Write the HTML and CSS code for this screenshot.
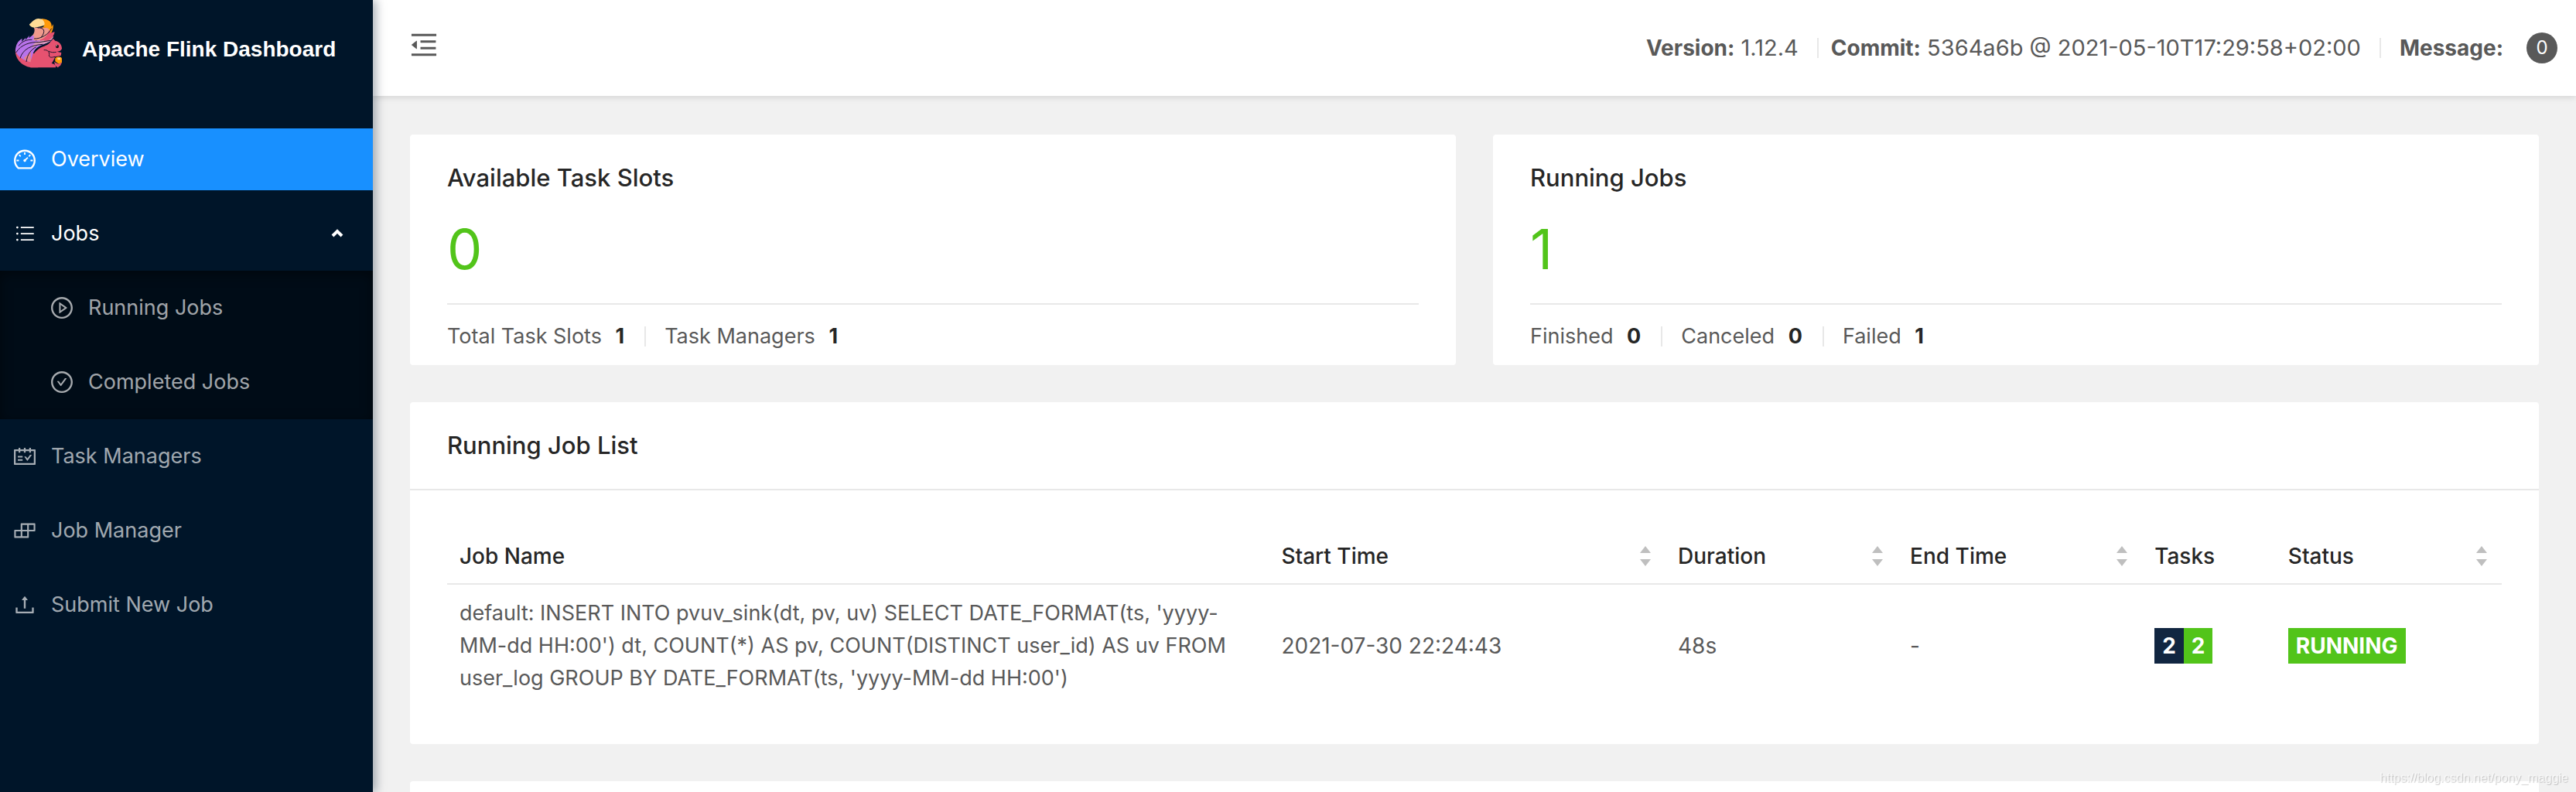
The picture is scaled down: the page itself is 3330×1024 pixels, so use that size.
FILE: index.html
```html
<!DOCTYPE html>
<html lang="en">

<head>
    <meta charset="utf-8">
    <meta name="viewport" content="width=device-width, initial-scale=1">
    <title>Apache Flink Dashboard</title>
    <link rel="stylesheet" href="styles.css">
</head>

<body>

    <div class="layout">
        <!-- Sidebar -->
        <aside class="sidebar">
            <a class="logo" href="#">
                <svg class="logo-img" viewBox="0 0 204 204" aria-hidden="true">
                    <!-- back and bottom of the tail -->
                    <path fill="#e65270" d="M12 124C8 160 34 190 72 196H100V150L60 130L20 116Z"/>
                    <!-- purple part of the tail -->
                    <path fill="#b873ea" d="M12 132C12 108 22 92 38 84L36 96L52 80L50 90L66 72L64 82L84 66L90 92L134 78L154 90C136 104 100 108 86 130C76 146 74 162 78 176C40 170 18 150 12 132Z"/>
                    <path fill="#d99ab8" d="M96 96C118 92 140 74 160 76C152 92 136 104 112 106C98 108 88 112 76 122C78 108 86 100 96 96Z"/>
                    <path fill="#e8808c" d="M44 158C58 150 66 140 72 130C70 146 70 162 76 176C60 172 50 166 44 158Z"/>
                    <!-- middle of the tail -->
                    <path fill="#ef9a8c" d="M84 42C88 52 86 62 76 74L84 72L82 90C104 94 134 84 150 62L146 40Z"/>
                    <path fill="#e65270" d="M108 88C126 82 140 68 142 50L150 62C144 78 130 90 108 92Z"/>
                    <!-- tip -->
                    <path fill="#ffdc96" d="M66 28C76 22 78 10 100 6C116 8 132 10 140 26C120 36 94 38 86 42C74 40 66 34 66 28Z"/>
                    <path fill="#ff9a0a" d="M112 6C140 8 154 18 152 38L158 28C160 46 154 58 148 66C148 48 140 38 114 42C128 34 130 20 112 6Z"/>
                    <!-- ears -->
                    <path fill="#e65270" d="M122 92C130 74 144 60 164 58C160 76 150 86 138 92Z"/>
                    <!-- body -->
                    <path fill="#e65270" d="M70 196C66 168 80 138 104 122C122 112 140 110 148 96L158 84L166 92C182 94 192 108 192 122C188 132 180 134 172 134L190 138L188 150L166 154C162 164 158 172 152 180C164 182 170 188 168 196Z"/>
                    <path fill="none" stroke="#20142c" stroke-width="3" d="M84 84C110 86 142 66 152 44M14 138C34 106 70 96 104 98L154 90M30 160C40 124 76 108 118 106M54 174C58 146 70 128 92 116M98 42C124 40 130 56 112 78M24 112C40 92 56 88 76 88M122 128C138 126 146 138 142 150C146 160 154 156 166 154M140 132C150 138 160 138 170 136"/>
                    <ellipse cx="174" cy="114" rx="6" ry="7" fill="#1a0b14"/>
                    <circle cx="172" cy="111" r="2" fill="#fff"/>
                    <!-- acorn -->
                    <path fill="#ff9a0a" d="M166 160C172 152 188 152 192 160V176L180 182L166 172Z"/>
                    <path fill="#ffdc96" d="M174 158H186V166H176Z"/>
                    <path fill="#e65270" d="M162 174L178 182L192 176L186 188L176 196L166 188Z"/>
                </svg>
                <h1>Apache Flink Dashboard</h1>
            </a>

            <nav class="menu">
                <a class="menu-item active" href="#">
                    <svg class="icon" viewBox="64 64 896 896" aria-hidden="true"><path d="M924.8 385.6a446.7 446.7 0 00-96-142.4 446.7 446.7 0 00-142.4-96C631.1 123.8 572.5 112 512 112s-119.1 11.8-174.4 35.2a446.7 446.7 0 00-142.4 96 446.7 446.7 0 00-96 142.4C75.8 440.9 64 499.5 64 560c0 132.7 58.3 257.7 159.9 343.1l1.7 1.4c5.8 4.8 13.1 7.5 20.6 7.5h531.7c7.5 0 14.8-2.7 20.6-7.5l1.7-1.4C901.7 817.7 960 692.7 960 560c0-60.5-11.9-119.1-35.2-174.4zM761.4 836H262.6A371.12 371.12 0 01140 560c0-99.4 38.7-192.8 109-263 70.3-70.3 163.7-109 263-109 99.4 0 192.8 38.7 263 109 70.3 70.3 109 163.7 109 263 0 105.6-44.5 205.5-122.6 276zM623.5 421.5a8.03 8.03 0 00-11.3 0L527.7 506c-18.7-5-39.4-.2-54.1 14.5a55.95 55.95 0 000 79.2 55.95 55.95 0 0079.2 0 55.87 55.87 0 0014.5-54.1l84.5-84.5c3.1-3.1 3.1-8.2 0-11.3l-28.3-28.3zM490 320h44c4.4 0 8-3.6 8-8v-80c0-4.4-3.6-8-8-8h-44c-4.4 0-8 3.6-8 8v80c0 4.4 3.6 8 8 8zm260 218v44c0 4.4 3.6 8 8 8h80c4.4 0 8-3.6 8-8v-44c0-4.4-3.6-8-8-8h-80c-4.4 0-8 3.6-8 8zm12.7-197.2l-31.1-31.1a8.03 8.03 0 00-11.3 0l-56.6 56.6a8.03 8.03 0 000 11.3l31.1 31.1c3.1 3.1 8.2 3.1 11.3 0l56.6-56.6c3.1-3.1 3.1-8.2 0-11.3zm-458.6-31.1a8.03 8.03 0 00-11.3 0l-31.1 31.1a8.03 8.03 0 000 11.3l56.6 56.6c3.1 3.1 8.2 3.1 11.3 0l31.1-31.1c3.1-3.1 3.1-8.2 0-11.3l-56.6-56.6zM262 530h-80c-4.4 0-8 3.6-8 8v44c0 4.4 3.6 8 8 8h80c4.4 0 8-3.6 8-8v-44c0-4.4-3.6-8-8-8z"/></svg>
                    <span>Overview</span>
                </a>

                <button class="menu-item menu-title" type="button" aria-expanded="true">
                    <svg class="icon" viewBox="64 64 896 896" aria-hidden="true"><path d="M348 228h540v56H348zM348 484h540v56H348zM348 740h540v56H348zM160 256a44 44 0 1088 0 44 44 0 10-88 0zM160 512a44 44 0 1088 0 44 44 0 10-88 0zM160 768a44 44 0 1088 0 44 44 0 10-88 0z"/></svg>
                    <span>Jobs</span>
                    <svg class="arrow" viewBox="0 0 16 12" aria-hidden="true"><path d="M2 9L8 3L14 9"/></svg>
                </button>

                <div class="submenu">
                    <a class="menu-item" href="#">
                        <svg class="icon" viewBox="64 64 896 896" aria-hidden="true"><path d="M512 64C264.6 64 64 264.6 64 512s200.6 448 448 448 448-200.6 448-448S759.4 64 512 64zm0 820c-205.4 0-372-166.6-372-372s166.6-372 372-372 372 166.6 372 372-166.6 372-372 372z"/><path d="M719.4 499.1l-296.1-215A15.9 15.9 0 00398 297v430c0 13.1 14.8 20.5 25.3 12.9l296.1-215a15.9 15.9 0 000-25.8zm-257.6 134V390.9L628.5 512 461.8 633.1z"/></svg>
                        <span>Running Jobs</span>
                    </a>
                    <a class="menu-item" href="#">
                        <svg class="icon" viewBox="64 64 896 896" aria-hidden="true"><path d="M512 64C264.6 64 64 264.6 64 512s200.6 448 448 448 448-200.6 448-448S759.4 64 512 64zm0 820c-205.4 0-372-166.6-372-372s166.6-372 372-372 372 166.6 372 372-166.6 372-372 372z"/><path d="M699 353h-46.9c-10.2 0-19.9 4.9-25.9 13.3L469 584.3l-71.2-98.8c-6-8.3-15.6-13.3-25.9-13.3H325c-6.5 0-10.3 7.4-6.5 12.7l124.6 172.8a31.8 31.8 0 0051.7 0l210.6-292c3.9-5.3.1-12.7-6.4-12.7z"/></svg>
                        <span>Completed Jobs</span>
                    </a>
                </div>

                <a class="menu-item" href="#">
                    <svg class="icon" viewBox="64 64 896 896" aria-hidden="true"><path d="M928 224H768v-56c0-4.4-3.6-8-8-8h-56c-4.4 0-8 3.6-8 8v56H548v-56c0-4.4-3.6-8-8-8h-56c-4.4 0-8 3.6-8 8v56H328v-56c0-4.4-3.6-8-8-8h-56c-4.4 0-8 3.6-8 8v56H96c-17.7 0-32 14.3-32 32v576c0 17.7 14.3 32 32 32h832c17.7 0 32-14.3 32-32V256c0-17.7-14.3-32-32-32zm-40 568H136V296h120v56c0 4.4 3.6 8 8 8h56c4.4 0 8-3.6 8-8v-56h148v56c0 4.4 3.6 8 8 8h56c4.4 0 8-3.6 8-8v-56h148v56c0 4.4 3.6 8 8 8h56c4.4 0 8-3.6 8-8v-56h120v496zM416 496H232c-4.4 0-8 3.6-8 8v48c0 4.4 3.6 8 8 8h184c4.4 0 8-3.6 8-8v-48c0-4.4-3.6-8-8-8zm0 136H232c-4.4 0-8 3.6-8 8v48c0 4.4 3.6 8 8 8h184c4.4 0 8-3.6 8-8v-48c0-4.4-3.6-8-8-8zm308.2-177.4L620.6 598.3l-52.8-73.1c-3-4.2-7.8-6.6-12.9-6.6H500c-6.5 0-10.3 7.4-6.5 12.7l114.1 158.2a15.9 15.9 0 0025.8 0l165-228.7c3.8-5.3 0-12.7-6.5-12.7H737c-5-.1-9.8 2.4-12.8 6.5z"/></svg>
                    <span>Task Managers</span>
                </a>
                <a class="menu-item" href="#">
                    <svg class="icon" viewBox="64 64 896 896" aria-hidden="true"><path d="M916 210H376c-17.7 0-32 14.3-32 32v236H108c-17.7 0-32 14.3-32 32v272c0 17.7 14.3 32 32 32h540c17.7 0 32-14.3 32-32V546h236c17.7 0 32-14.3 32-32V242c0-17.7-14.3-32-32-32zm-504 68h200v200H412V278zm-68 468H144V546h200v200zm268 0H412V546h200v200zm268-268H680V278h200v200z"/></svg>
                    <span>Job Manager</span>
                </a>
                <a class="menu-item" href="#">
                    <svg class="icon" viewBox="64 64 896 896" aria-hidden="true"><path d="M400 317.7h73.9V656c0 4.4 3.6 8 8 8h60c4.4 0 8-3.6 8-8V317.7H624c6.7 0 10.4-7.7 6.3-12.9L518.3 163a8 8 0 00-12.6 0l-112 141.7c-4.1 5.3-.4 13 6.3 13zM878 626h-60c-4.4 0-8 3.6-8 8v154H214V634c0-4.4-3.6-8-8-8h-60c-4.4 0-8 3.6-8 8v198c0 17.7 14.3 32 32 32h684c17.7 0 32-14.3 32-32V634c0-4.4-3.6-8-8-8z"/></svg>
                    <span>Submit New Job</span>
                </a>
            </nav>
        </aside>

        <div class="main">
            <!-- Top bar -->
            <header class="header">
                <button class="fold-button" type="button" aria-label="Collapse menu">
                    <svg viewBox="64 64 896 896" aria-hidden="true"><path d="M408 442h480c4.4 0 8-3.6 8-8v-56c0-4.4-3.6-8-8-8H408c-4.4 0-8 3.6-8 8v56c0 4.4 3.6 8 8 8zm-8 204c0 4.4 3.6 8 8 8h480c4.4 0 8-3.6 8-8v-56c0-4.4-3.6-8-8-8H408c-4.4 0-8 3.6-8 8v56zm504-486H120c-4.4 0-8 3.6-8 8v56c0 4.4 3.6 8 8 8h784c4.4 0 8-3.6 8-8v-56c0-4.4-3.6-8-8-8zm0 632H120c-4.4 0-8 3.6-8 8v56c0 4.4 3.6 8 8 8h784c4.4 0 8-3.6 8-8v-56c0-4.4-3.6-8-8-8zM115.4 518.9L271.7 642c5.8 4.6 14.4.5 14.4-6.9V388.9c0-7.4-8.5-11.5-14.4-6.9L115.4 505.1a8.74 8.74 0 000 13.8z"/></svg>
                </button>
                <div class="info">
                    <span><strong>Version:</strong> 1.12.4</span>
                    <span class="divider"></span>
                    <span><strong>Commit:</strong> 5364a6b @ 2021-05-10T17:29:58+02:00</span>
                    <span class="divider"></span>
                    <strong class="message">Message:</strong>
                    <span class="badge">0</span>
                </div>
            </header>

            <main class="content">
                <div class="stats">
                    <section class="card stat">
                        <h2>Available Task Slots</h2>
                        <div class="total">0</div>
                        <div class="stat-footer">
                            <span>Total Task Slots <b>1</b></span>
                            <span class="divider"></span>
                            <span>Task Managers <b>1</b></span>
                        </div>
                    </section>
                    <section class="card stat">
                        <h2>Running Jobs</h2>
                        <div class="total">1</div>
                        <div class="stat-footer">
                            <span>Finished <b>0</b></span>
                            <span class="divider"></span>
                            <span>Canceled <b>0</b></span>
                            <span class="divider"></span>
                            <span>Failed <b>1</b></span>
                        </div>
                    </section>
                </div>

                <section class="card">
                    <h2 class="card-head">Running Job List</h2>
                    <div class="card-body">
                        <table class="job-table">
                            <thead>
                                <tr>
                                    <th class="col-name">Job Name</th>
                                    <th class="col-start"><div class="sortable">Start Time <svg class="sorter" viewBox="0 0 20 26" aria-hidden="true"><path d="M10 0L17 9H3ZM10 26L17 17H3Z"/></svg></div></th>
                                    <th class="col-duration"><div class="sortable">Duration <svg class="sorter" viewBox="0 0 20 26" aria-hidden="true"><path d="M10 0L17 9H3ZM10 26L17 17H3Z"/></svg></div></th>
                                    <th class="col-end"><div class="sortable">End Time <svg class="sorter" viewBox="0 0 20 26" aria-hidden="true"><path d="M10 0L17 9H3ZM10 26L17 17H3Z"/></svg></div></th>
                                    <th class="col-tasks">Tasks</th>
                                    <th class="col-status"><div class="sortable">Status <svg class="sorter" viewBox="0 0 20 26" aria-hidden="true"><path d="M10 0L17 9H3ZM10 26L17 17H3Z"/></svg></div></th>
                                </tr>
                            </thead>
                            <tbody>
                                <tr>
                                    <td class="job-name">default: INSERT INTO pvuv_sink(dt, pv, uv) SELECT DATE_FORMAT(ts, 'yyyy-MM-dd HH:00') dt, COUNT(*) AS pv, COUNT(DISTINCT user_id) AS uv FROM user_log GROUP BY DATE_FORMAT(ts, 'yyyy-MM-dd HH:00')</td>
                                    <td>2021-07-30 22:24:43</td>
                                    <td>48s</td>
                                    <td>-</td>
                                    <td><div class="tags"><span class="tag navy">2</span><span class="tag green">2</span></div></td>
                                    <td><div class="tags"><span class="tag green">RUNNING</span></div></td>
                                </tr>
                            </tbody>
                        </table>
                    </div>
                </section>

                <!-- next list, continues below the window -->
                <section class="card">
                    <div class="card-head"></div>
                </section>
            </main>
        </div>
    </div>

    <div class="watermark">https://blog.csdn.net/pony_maggie</div>

</body>

</html>
```

FILE: styles.css
```css
* {
    box-sizing: border-box;
}

body {
    margin: 0;
    font-family: Inter, "Liberation Sans", sans-serif;
    font-size: 28px;
    line-height: 42px;
    color: #595959;
    background-color: #f1f1f1;
}

a {
    color: inherit;
    text-decoration: none;
}

button {
    font: inherit;
    color: inherit;
    background: none;
    border: none;
    padding: 0;
    cursor: pointer;
}

.layout {
    display: flex;
    height: 100vh;
    overflow: hidden;
}

/* Sidebar */
.sidebar {
    flex: 0 0 482px;
    background-color: #001529;
    box-shadow: 4px 0 12px rgba(0, 21, 41, 0.35);
    z-index: 2;
}

.logo {
    display: flex;
    align-items: center;
    gap: 22px;
    height: 128px;
    padding-left: 16px;
    margin-bottom: 30px;
    color: #fff;
}

.logo-img {
    width: 68px;
    height: 68px;
    margin-bottom: 16px;
}

.logo h1 {
    margin: 0;
    font-family: "Liberation Sans", Arial, sans-serif;
    font-size: 28px;
    font-weight: bold;
}

.menu,
.submenu {
    display: flex;
    flex-direction: column;
}

.menu-item {
    display: flex;
    align-items: center;
    gap: 20px;
    height: 80px;
    margin: 8px 0;
    padding: 0 38px 0 18px;
    font-size: 27px;
    color: rgba(255, 255, 255, 0.65);
    text-align: left;
}

.menu-item.active {
    background-color: #1890ff;
    color: #fff;
}

.menu-title {
    color: #fff;
}

.submenu {
    background-color: #000c17;
    box-shadow: inset 0 4px 16px rgba(0, 0, 0, 0.45);
}

.submenu .menu-item {
    padding-left: 66px;
}

.icon {
    width: 28px;
    height: 28px;
    fill: currentColor;
}

.arrow {
    width: 16px;
    height: 12px;
    margin-left: auto;
    fill: none;
    stroke: currentColor;
    stroke-width: 4;
}

/* Top bar */
.main {
    flex: 1;
    min-width: 0;
}

.header {
    display: flex;
    align-items: center;
    justify-content: space-between;
    height: 124px;
    padding: 0 24px 0 48px;
    background-color: #fff;
    box-shadow: 0 2px 8px rgba(0, 0, 0, 0.12);
}

.fold-button {
    height: 36px;
    margin-bottom: 8px;
}

.fold-button svg {
    display: block;
    width: 36px;
    height: 36px;
    fill: #595959;
}

.info {
    display: flex;
    align-items: center;
    font-size: 29px;
}

.info strong {
    font-size: 28px;
}

.info .divider {
    margin: 0 16px 0 24px;
}

.divider {
    width: 2px;
    height: 26px;
    background-color: #e8e8e8;
}

.message {
    margin-left: 8px;
}

.badge {
    width: 40px;
    height: 40px;
    margin-left: 30px;
    border-radius: 50%;
    background-color: #595959;
    color: #fff;
    font-size: 24px;
    line-height: 40px;
    text-align: center;
}

/* Cards */
.content {
    display: flex;
    flex-direction: column;
    gap: 48px;
    padding: 50px 48px;
}

.stats {
    display: grid;
    grid-template-columns: 1fr 1fr;
    gap: 48px;
}

.card {
    border-radius: 4px;
    background-color: #fff;
}

.card h2 {
    margin: 0;
    font-size: 31px;
    line-height: 48px;
    font-weight: 500;
    color: #262626;
}

.stat {
    padding: 32px 48px 0;
}

.total {
    margin: 14px 0 16px;
    font-size: 72px;
    line-height: 108px;
    color: #52c41a;
}

.stat-footer {
    display: flex;
    align-items: center;
    gap: 24px;
    padding: 20px 0 16px;
    border-top: 2px solid #e8e8e8;
    font-size: 27px;
}

.stat-footer b {
    margin: 0 2px 0 10px;
    font-weight: 700;
    color: #262626;
}

.card-head {
    min-height: 114px;
    padding: 32px 48px;
    border-bottom: 2px solid #e8e8e8;
}

.card-body {
    padding: 48px;
}

/* Job table */
.job-table {
    width: 100%;
    table-layout: fixed;
    border-collapse: separate;
    border-spacing: 0;
}

.job-table th,
.job-table td {
    padding: 16px;
    text-align: left;
}

.job-table th {
    padding-bottom: 14px;
    border-bottom: 2px solid #e8e8e8;
    font-weight: 500;
    color: #262626;
}

.job-table .job-name {
    font-size: 27px;
}

.col-name {
    width: 40%;
}

.col-start {
    width: 19.3%;
}

.col-duration {
    width: 11.3%;
}

.col-end {
    width: 11.9%;
}

.col-tasks {
    width: 6.5%;
}

.sortable {
    display: flex;
    align-items: center;
    justify-content: space-between;
}

.sorter {
    width: 20px;
    height: 26px;
    fill: #bfbfbf;
}

.tags {
    display: flex;
}

.tag {
    padding: 0 10px;
    line-height: 46px;
    font-weight: 700;
    color: #fff;
}

.tag.navy {
    background-color: #112641;
}

.tag.green {
    background-color: #52c41a;
}

.watermark {
    position: fixed;
    right: 10px;
    bottom: 8px;
    z-index: 3;
    font-family: "Liberation Sans", Arial, sans-serif;
    font-size: 16px;
    line-height: 20px;
    color: rgba(255, 255, 255, 0.7);
    text-shadow: 1px 1px 1px rgba(0, 0, 0, 0.2);
}
```
